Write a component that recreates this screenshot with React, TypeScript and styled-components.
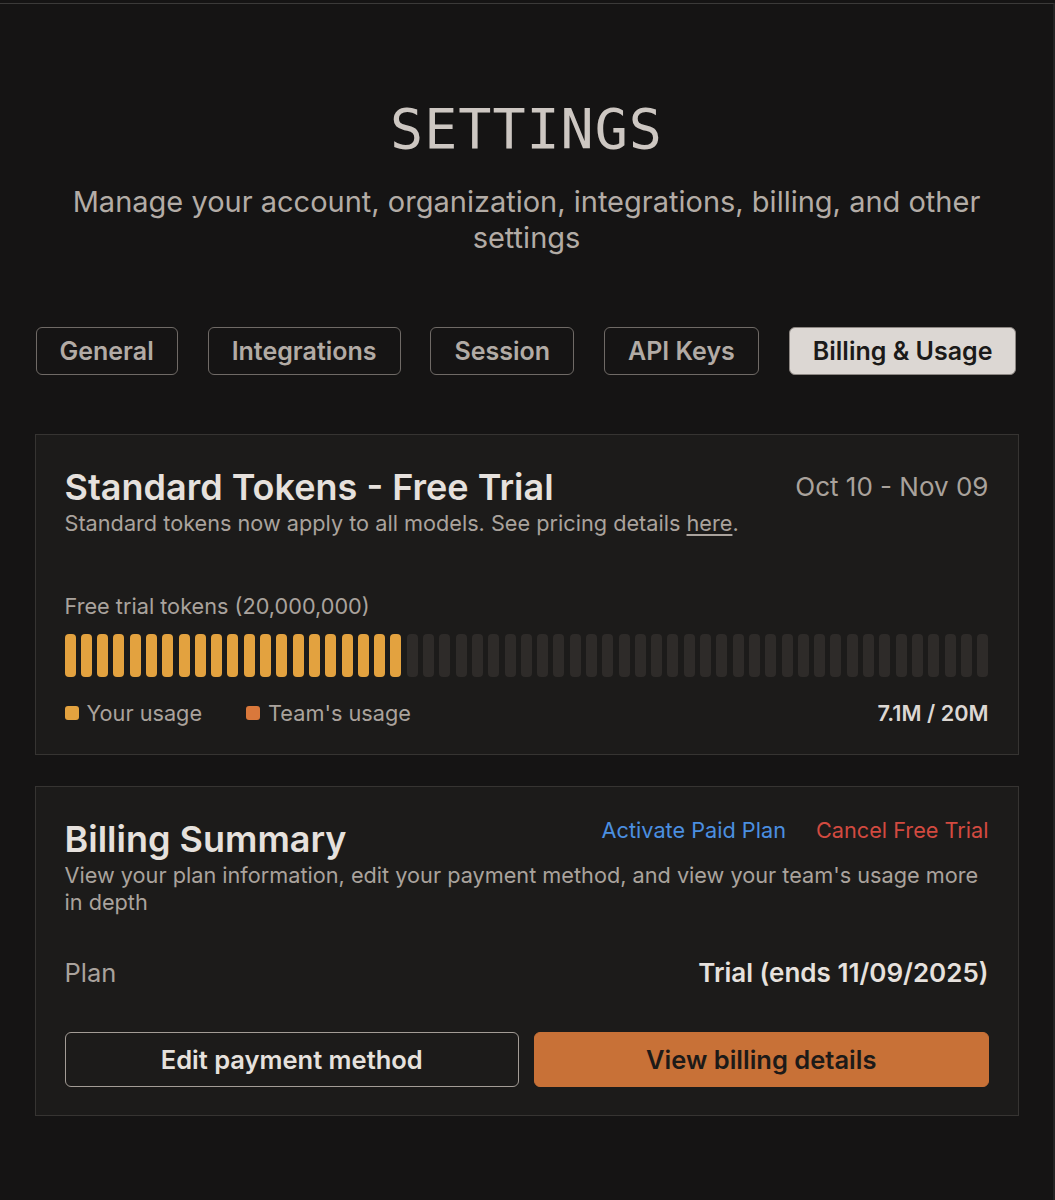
import styled, { createGlobalStyle } from "styled-components";

const GlobalStyle = createGlobalStyle`
  html, body {
    margin: 0;
    padding: 0;
    background: #151414;
  }
  body {
    font-family: Inter, "Noto Sans", "Liberation Sans", sans-serif;
    -webkit-font-smoothing: antialiased;
  }
`;

const Frame = styled.div`
  min-height: 1200px;
  box-sizing: border-box;
  border-top: 1px solid #3b3a39;
  border-right: 2px solid #242323;
  margin-top: 3px;
  padding: 0 0 40px;
`;

const Page = styled.div`
  width: 984px;
  margin: 0 auto;
  padding-top: 89px;
  display: flex;
  flex-direction: column;
`;

const Header = styled.header`
  display: flex;
  flex-direction: column;
  align-items: center;
  text-align: center;
`;

const Title = styled.h1`
  margin: 0;
  font-family: "DejaVu Sans Mono", "Liberation Mono", monospace;
  font-weight: 400;
  font-size: 55px;
  letter-spacing: 1px;
  line-height: 72px;
  color: #cdc7c2;
`;

const Subtitle = styled.p`
  margin: 19px 0 0;
  font-size: 29px;
  line-height: 36px;
  color: #b3aca6;
  max-width: 940px;
`;

const Tabs = styled.nav`
  display: flex;
  justify-content: space-between;
  margin-top: 71px;
  padding: 0 2px 0 1px;
`;

const Tab = styled.button<{ $active?: boolean }>`
  height: 48px;
  padding: 0 23px;
  border-radius: 6px;
  border: 1.5px solid ${(p) => (p.$active ? "#8d8783" : "#6f6a66")};
  background: ${(p) => (p.$active ? "#dcd7d3" : "transparent")};
  color: ${(p) => (p.$active ? "#1b1a19" : "#b2aba5")};
  font-family: inherit;
  font-size: 25px;
  font-weight: 600;
  cursor: pointer;
`;

const Card = styled.section<{ $top: number }>`
  margin-top: ${(p) => p.$top}px;
  border: 1.5px solid #363432;
  background: #1c1b1a;
  padding: 29px 29px 28px;
  display: flex;
  flex-direction: column;
`;

const CardHead = styled.div`
  display: flex;
  justify-content: space-between;
  align-items: flex-start;
`;

const CardTitle = styled.h2`
  margin: 0;
  font-size: 36px;
  line-height: 46px;
  font-weight: 600;
  color: #e6e1dd;
`;

const DateRange = styled.span`
  font-size: 26px;
  line-height: 46px;
  color: #a9a29c;
`;

const Muted = styled.p`
  margin: 0;
  font-size: 21.7px;
  line-height: 27px;
  color: #aaa39d;

  a {
    color: inherit;
    text-decoration: underline;
    text-underline-offset: 3px;
  }
`;

const BarLabel = styled(Muted)`
  margin-top: 56px;
`;

const Bars = styled.div`
  display: flex;
  justify-content: space-between;
  margin-top: 14px;
  height: 43px;
`;

const Bar = styled.div<{ $on: boolean }>`
  width: 11px;
  border-radius: 4px;
  background: ${(p) => (p.$on ? "#e3a23f" : "#2e2b29")};
`;

const LegendRow = styled.div`
  display: flex;
  align-items: center;
  margin-top: 23px;
`;

const LegendItem = styled.span`
  display: flex;
  align-items: center;
  gap: 8px;
  font-size: 21.7px;
  color: #aaa39d;
  margin-right: 44px;
`;

const Swatch = styled.i<{ $color: string }>`
  width: 14px;
  height: 14px;
  border-radius: 3px;
  background: ${(p) => p.$color};
`;

const Total = styled.span`
  margin-left: auto;
  font-size: 21.7px;
  font-weight: 600;
  color: #dcd7d3;
`;

const Links = styled.div`
  display: flex;
  gap: 30px;
  margin-top: -9px;
`;

const TextLink = styled.a<{ $color: string }>`
  font-size: 21.7px;
  line-height: 46px;
  color: ${(p) => p.$color};
  text-decoration: none;
  cursor: pointer;
`;

const PlanRow = styled.div`
  display: flex;
  justify-content: space-between;
  margin-top: 41px;
  font-size: 26px;
  line-height: 32px;
`;

const PlanLabel = styled.span`
  font-size: 25.5px;
  color: #a9a29c;
`;

const PlanValue = styled.span`
  color: #e6e1dd;
  font-weight: 600;
`;

const Actions = styled.div`
  display: grid;
  grid-template-columns: 1fr 1fr;
  gap: 15px;
  margin-top: 43px;
`;

const ActionButton = styled.button<{ $primary?: boolean }>`
  height: 55px;
  border-radius: 6px;
  font-family: inherit;
  font-size: 25.5px;
  font-weight: 600;
  cursor: pointer;
  border: 1.5px solid ${(p) => (p.$primary ? "#c87137" : "#a39c96")};
  background: ${(p) => (p.$primary ? "#c87137" : "transparent")};
  color: ${(p) => (p.$primary ? "#1d1a18" : "#e6e1dd")};
`;

const TOTAL_BARS = 57;
const USED = 7.1;
const LIMIT = 20;

export default function App() {
  const filled = Math.ceil((USED / LIMIT) * TOTAL_BARS);
  const tabs = ["General", "Integrations", "Session", "API Keys", "Billing & Usage"];

  return (
    <>
      <GlobalStyle />
      <Frame>
        <Page>
          <Header>
            <Title>SETTINGS</Title>
            <Subtitle>
              Manage your account, organization, integrations, billing, and other settings
            </Subtitle>
          </Header>

          <Tabs>
            {tabs.map((t) => (
              <Tab key={t} $active={t === "Billing & Usage"}>
                {t}
              </Tab>
            ))}
          </Tabs>

          <Card $top={59}>
            <CardHead>
              <CardTitle>Standard Tokens - Free Trial</CardTitle>
              <DateRange>Oct 10 - Nov 09</DateRange>
            </CardHead>
            <Muted>
              Standard tokens now apply to all models. See pricing details <a>here</a>.
            </Muted>

            <BarLabel>Free trial tokens (20,000,000)</BarLabel>
            <Bars>
              {Array.from({ length: TOTAL_BARS }, (_, i) => (
                <Bar key={i} $on={i < filled} />
              ))}
            </Bars>
            <LegendRow>
              <LegendItem>
                <Swatch $color="#e3a23f" />
                Your usage
              </LegendItem>
              <LegendItem>
                <Swatch $color="#d9783b" />
                Team's usage
              </LegendItem>
              <Total>7.1M / 20M</Total>
            </LegendRow>
          </Card>

          <Card $top={31}>
            <CardHead>
              <CardTitle>Billing Summary</CardTitle>
              <Links>
                <TextLink $color="#4b8fe0">Activate Paid Plan</TextLink>
                <TextLink $color="#d24a40">Cancel Free Trial</TextLink>
              </Links>
            </CardHead>
            <Muted>
              View your plan information, edit your payment method, and view your team's usage more
              in depth
            </Muted>
            <PlanRow>
              <PlanLabel>Plan</PlanLabel>
              <PlanValue>Trial (ends 11/09/2025)</PlanValue>
            </PlanRow>
            <Actions>
              <ActionButton>Edit payment method</ActionButton>
              <ActionButton $primary>View billing details</ActionButton>
            </Actions>
          </Card>
        </Page>
      </Frame>
    </>
  );
}
